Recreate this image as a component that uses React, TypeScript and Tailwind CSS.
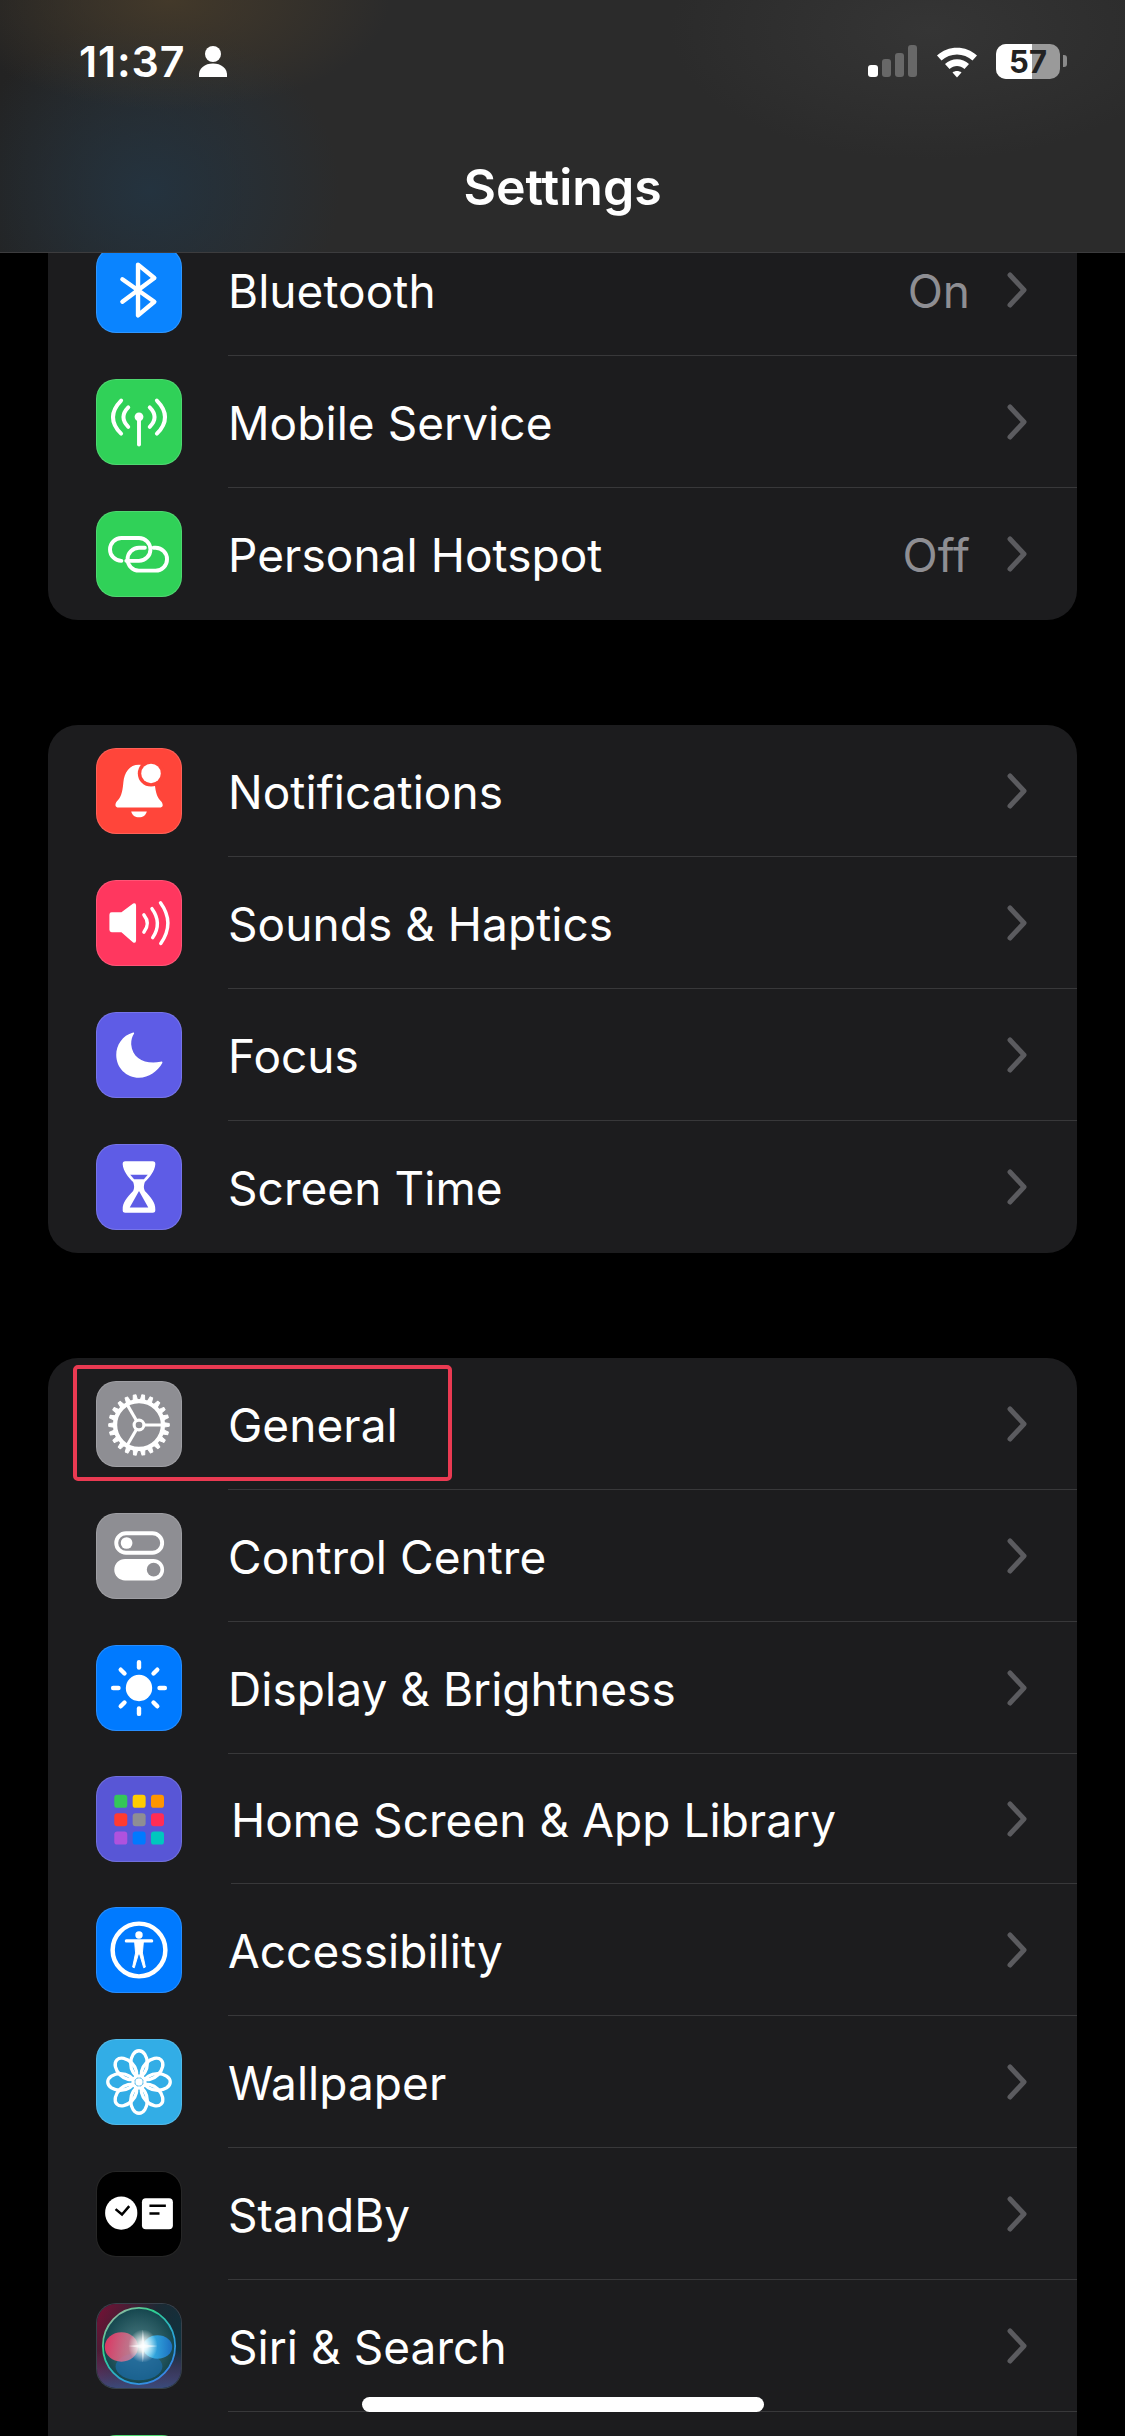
import React from "react";

const W = "#ffffff";

function Svg({ children }: { children: React.ReactNode }) {
  return (
    <svg viewBox="0 0 86 86" className="w-full h-full block">
      {children}
    </svg>
  );
}

const Bluetooth = () => (
  <Svg>
    <path d="M26 32 L58.7 55 L42 69 V17 L58.7 30.7 L26 55" fill="none" stroke={W} strokeWidth="4.5" strokeLinecap="round" strokeLinejoin="round" />
  </Svg>
);

const Antenna = () => (
  <Svg>
    <circle cx="43" cy="37.7" r="4.5" fill={W} />
    <path d="M43 38 V66" stroke={W} strokeWidth="4" strokeLinecap="round" />
    <g fill="none" stroke={W} strokeWidth="4" strokeLinecap="round">
      <path d="M32 28 Q22 38 32 48" />
      <path d="M54 28 Q64 38 54 48" />
      <path d="M24.7 21 Q8 38 24.7 55" />
      <path d="M61.3 21 Q78 38 61.3 55" />
    </g>
  </Svg>
);

const Hotspot = () => (
  <Svg>
    <g fill="none" stroke={W} strokeWidth="4" strokeLinecap="round">
      <path d="M25 50 a11.7 11.7 0 0 1 0 -23.4 h18 a11.7 11.7 0 0 1 0 23.4 h-13" />
      <path d="M58 36.6 h2 a11.7 11.7 0 0 1 0 23.4 h-17 a11.7 11.7 0 0 1 0 -23.4 h6" />
    </g>
  </Svg>
);

const Bell = () => (
  <Svg>
    <path d="M43 16 C33 16 28 24 27 34 C26 46 24 50 20 54 C18 57 18.7 60 22 60 H64 C68 60 68 57 66 54 C62 50 60 46 59 34 C58 24 53 16 43 16 Z" fill={W} />
    <path d="M35 64 H51 C50 68 47 70 43 70 C39 70 36 68 35 64 Z" fill={W} />
    <circle cx="55.3" cy="25" r="13.5" fill="#ff453a" />
    <circle cx="55.3" cy="25" r="10" fill={W} />
  </Svg>
);

const Speaker = () => (
  <Svg>
    <path d="M15 32 H25 L37 23 Q40 22 40 25 V61 Q40 64 37 63 L25 52.5 H15 Q12.7 52.5 12.7 50 V34.5 Q12.7 32 15 32 Z" fill={W} />
    <g fill="none" stroke={W} strokeLinecap="round" strokeWidth="3.5">
      <path d="M48 34.7 Q55 43.5 48 52.3" />
      <path d="M56.3 28.3 Q67 43 57 58" />
      <path d="M65 22.3 Q80 43 65.3 64" />
    </g>
  </Svg>
);

const Moon = () => (
  <Svg>
    <path d="M37 20 C26 23 19.7 33 19.7 43 C19.7 56 30 66.3 43 66.3 C53 66.3 62 60 67 51 Q67 49 65 50 C50 53 36 47 35 32 C35 27 36 24 38 21 Q38 19.5 37 20 Z" fill={W} />
  </Svg>
);

const Hourglass = () => (
  <Svg>
    <path d="M29 16.7 H57 Q60 16.7 59.7 20 C59 27 54 33 49 38 Q47 43 49 47 C55 53 60 59 59.7 66 Q60 69.3 57 69.3 H29 Q26 69.3 26.3 66 C26 59 31 53 37 47 Q39 43 37 38 C32 33 27 27 26.3 20 Q26 16.7 29 16.7 Z" fill={W} />
    <path d="M34 30.5 H52 L48 35 H38 Z" fill="#5e5ce6" />
    <path d="M43 47 L52.5 64 H33.5 Z" fill="#5e5ce6" />
  </Svg>
);

const Gear = () => {
  const teeth = Array.from({ length: 22 }, (_, i) => (i * 360) / 22);
  return (
    <Svg>
      <g stroke={W}>
        {teeth.map((a) => (
          <path key={a} d="M40.8 18 L41.6 13 H44.4 L45.2 18 Z" fill={W} strokeWidth="1" strokeLinejoin="round" transform={`rotate(${a + 8} 43 44)`} />
        ))}
      </g>
      <circle cx="43" cy="44" r="24.5" fill="none" stroke={W} strokeWidth="4.4" />
      <g stroke={W} strokeWidth="3.2">
        <line x1="48" y1="44" x2="68" y2="44" />
        <line x1="40.5" y1="39.7" x2="30.5" y2="22.4" />
        <line x1="40.5" y1="48.3" x2="30.5" y2="65.6" />
      </g>
      <circle cx="43" cy="44" r="5" fill="none" stroke={W} strokeWidth="3.2" />
    </Svg>
  );
};

const Toggles = () => (
  <Svg>
    <rect x="19.7" y="19.7" width="47" height="20" rx="10" fill="none" stroke={W} strokeWidth="4" />
    <circle cx="30.3" cy="29.7" r="6" fill={W} />
    <rect x="17.7" y="46" width="51" height="22" rx="11" fill={W} />
    <circle cx="58" cy="57" r="7" fill="#8e8e93" />
  </Svg>
);

const Sun = () => {
  const rays = [0, 45, 90, 135, 180, 225, 270, 315];
  return (
    <Svg>
      <circle cx="43" cy="43" r="13.5" fill={W} />
      {rays.map((a) => (
        <line key={a} x1="43" y1="22" x2="43" y2="16.5" stroke={W} strokeWidth="4.5" strokeLinecap="round" transform={`rotate(${a} 43 43)`} />
      ))}
    </Svg>
  );
};

const GridIcon = () => {
  const colors = ["#34c759", "#ffcc00", "#ff9500", "#ff3b30", "#8e8e93", "#ff2d55", "#af52de", "#007aff", "#00c7be"];
  return (
    <Svg>
      {colors.map((c, i) => (
        <rect key={c} x={17.7 + (i % 3) * 18.8} y={18.3 + Math.floor(i / 3) * 18.8} width="13.3" height="13.3" rx="3" fill={c} />
      ))}
    </Svg>
  );
};

const Access = () => (
  <Svg>
    <circle cx="43" cy="43" r="27" fill="none" stroke={W} strokeWidth="4.6" />
    <circle cx="43" cy="27.7" r="3.8" fill={W} />
    <path d="M30 33.7 H56" stroke={W} strokeWidth="3.2" strokeLinecap="round" />
    <path d="M38.5 34 H47.5 L46.5 46 L49.5 60.5 L47.8 61.2 L43.6 47 H42.4 L38.2 61.2 L36.5 60.5 L39.5 46 Z" fill={W} stroke={W} strokeWidth="1" strokeLinejoin="round" />
  </Svg>
);

const Flower = () => {
  const petals = [0, 45, 90, 135, 180, 225, 270, 315];
  return (
    <Svg>
      {petals.map((a) => (
        <ellipse key={a} cx="43" cy="24" rx="8.5" ry="13" fill="none" stroke={W} strokeWidth="3.4" transform={`rotate(${a} 43 43)`} />
      ))}
      <circle cx="43" cy="43" r="3.8" fill={W} />
    </Svg>
  );
};

const StandBy = () => (
  <Svg>
    <ellipse cx="24.8" cy="42" rx="16.5" ry="17" fill={W} />
    <path d="M19 38 L25.6 43.5 L33 35" fill="none" stroke="#000" strokeWidth="2.6" />
    <rect x="46" y="27" width="31.7" height="31.5" rx="4" fill={W} />
    <path d="M53.7 34.5 H70.5 M53.7 42.5 H64" stroke="#000" strokeWidth="2.6" />
  </Svg>
);

const Siri = () => (
  <svg viewBox="0 0 86 86" className="w-full h-full block">
    <defs>
      <linearGradient id="siriBg" x1="0" y1="0" x2="1" y2="0.6">
        <stop offset="0" stopColor="#7a0f35" />
        <stop offset="0.55" stopColor="#1b2a34" />
        <stop offset="1" stopColor="#0e3340" />
      </linearGradient>
      <linearGradient id="siriBg2" x1="0" y1="0" x2="0" y2="1">
        <stop offset="0.55" stopColor="#a02a70" stopOpacity="0" />
        <stop offset="1" stopColor="#43518a" stopOpacity="0.8" />
      </linearGradient>
      <linearGradient id="siriRing" x1="0" y1="0" x2="0.8" y2="1">
        <stop offset="0" stopColor="#c9a8b0" />
        <stop offset="0.35" stopColor="#30d28e" />
        <stop offset="0.7" stopColor="#2aa5d8" />
        <stop offset="1" stopColor="#3a7fe8" />
      </linearGradient>
      <radialGradient id="siriOrb" cx="0.5" cy="0.5" r="0.55">
        <stop offset="0" stopColor="#4e7f86" />
        <stop offset="1" stopColor="#0f4048" />
      </radialGradient>
      <radialGradient id="siriStar" cx="0.5" cy="0.5" r="0.5">
        <stop offset="0" stopColor="#ffffff" />
        <stop offset="0.3" stopColor="#ffffff" stopOpacity="0.85" />
        <stop offset="1" stopColor="#ffffff" stopOpacity="0" />
      </radialGradient>
      <linearGradient id="siriPink" x1="0" y1="0" x2="1" y2="0.2">
        <stop offset="0" stopColor="#e0305f" />
        <stop offset="1" stopColor="#e88aa0" stopOpacity="0.7" />
      </linearGradient>
      <linearGradient id="siriBlue" x1="0" y1="0" x2="1" y2="0">
        <stop offset="0" stopColor="#3fc8ee" />
        <stop offset="1" stopColor="#1c6fc0" />
      </linearGradient>
    </defs>
    <rect width="86" height="86" fill="url(#siriBg)" />
    <rect width="86" height="86" fill="url(#siriBg2)" />
    <ellipse cx="43" cy="43" rx="37" ry="39" fill="url(#siriOrb)" stroke="url(#siriRing)" strokeWidth="1.8" />
    <ellipse cx="43" cy="64" rx="24" ry="14" fill="#1c6fb0" opacity="0.65" />
    <ellipse cx="25" cy="44" rx="17" ry="15" fill="url(#siriPink)" />
    <ellipse cx="62" cy="44" rx="15" ry="12" fill="url(#siriBlue)" />
    <ellipse cx="47" cy="43" rx="15" ry="17" fill="url(#siriStar)" />
    <path d="M47 26 L48.5 41.5 L62 43 L48.5 45 L47 60 L45.5 45 L32 43 L45.5 41.5 Z" fill="#ffffff" opacity="0.6" />
  </svg>
);

type RowData = {
  label: string;
  bg: string;
  icon: React.ReactNode;
  value?: string;
};

const group1: RowData[] = [
  { label: "Bluetooth", bg: "bg-[#0a84ff]", icon: <Bluetooth />, value: "On" },
  { label: "Mobile Service", bg: "bg-[#30d158]", icon: <Antenna /> },
  { label: "Personal Hotspot", bg: "bg-[#30d158]", icon: <Hotspot />, value: "Off" },
];

const group2: RowData[] = [
  { label: "Notifications", bg: "bg-[#ff453a]", icon: <Bell /> },
  { label: "Sounds & Haptics", bg: "bg-[#ff375f]", icon: <Speaker /> },
  { label: "Focus", bg: "bg-[#5e5ce6]", icon: <Moon /> },
  { label: "Screen Time", bg: "bg-[#5e5ce6]", icon: <Hourglass /> },
];

const group3: RowData[] = [
  { label: "General", bg: "bg-[#8e8e93]", icon: <Gear /> },
  { label: "Control Centre", bg: "bg-[#8e8e93]", icon: <Toggles /> },
  { label: "Display & Brightness", bg: "bg-[#007aff]", icon: <Sun /> },
  { label: "Home Screen & App Library", bg: "bg-[#5856d6]", icon: <GridIcon /> },
  { label: "Accessibility", bg: "bg-[#007aff]", icon: <Access /> },
  { label: "Wallpaper", bg: "bg-[#32ade6]", icon: <Flower /> },
  { label: "StandBy", bg: "bg-black", icon: <StandBy /> },
  { label: "Siri & Search", bg: "bg-[#14202c]", icon: <Siri /> },
  { label: "", bg: "bg-[#30d158]", icon: null },
];

function Chevron() {
  return (
    <svg viewBox="0 0 22 38" className="w-[22px] h-[38px] shrink-0">
      <path d="M4 4 L18 19 L4 34" fill="none" stroke="#5b5b5f" strokeWidth="5" strokeLinecap="round" strokeLinejoin="round" />
    </svg>
  );
}

function Row({ row, last }: { row: RowData; last: boolean }) {
  const home = row.label.startsWith("Home");
  return (
    <div className={`flex items-center ${home ? "h-[130px]" : "h-[132px]"}`}>
      <div className={`ml-[48px] w-[86px] h-[86px] shrink-0 rounded-[20px] overflow-hidden border border-white/15 ${row.bg}`}>
        {row.icon}
      </div>
      <div
        className={`h-full flex-1 flex items-center pr-[49px] border-b ${last ? "border-transparent" : "border-[#38383a]"} ${home ? "ml-[49px]" : "ml-[46px]"}`}
      >
        <span className="flex-1 text-[46px] leading-none text-white tracking-[0.05px] pt-[3px]">{row.label}</span>
        {row.value && <span className="text-[46px] leading-none text-[#8e8e93] mr-[36px] pt-[3px]">{row.value}</span>}
        <Chevron />
      </div>
    </div>
  );
}

function Card({ rows, children }: { rows: RowData[]; children?: React.ReactNode }) {
  return (
    <section className="relative shrink-0 ml-[48px] w-[1029px] rounded-[30px] bg-[#1c1c1e] overflow-hidden">
      {rows.map((r, i) => (
        <Row key={i} row={r} last={i === rows.length - 1} />
      ))}
      {children}
    </section>
  );
}

export default function App() {
  return (
    <div className="relative w-[1125px] h-[2436px] overflow-hidden bg-black flex flex-col font-['Inter','Liberation_Sans',sans-serif]">
      <header className="relative z-10 h-[253px] shrink-0 border-b border-[#3c3c3e] bg-[#2b2b2b] bg-[radial-gradient(ellipse_220px_110px_at_170px_0px,#43392a_0%,transparent_100%),radial-gradient(ellipse_190px_170px_at_150px_190px,#24333f_0%,transparent_100%),radial-gradient(ellipse_260px_130px_at_930px_30px,#353535_0%,transparent_100%),linear-gradient(90deg,#232323_0%,#2b2b2b_22%)]">
        <div className="flex items-center justify-between h-[36px] mt-[43px] pl-[79px] pr-[58px]">
          <div className="flex items-center gap-[13px]">
            <span className="text-[43px] leading-none font-semibold text-white tracking-[0.8px]">11:37</span>
            <svg viewBox="0 0 30 32" className="w-[30px] h-[32px]">
              <circle cx="15" cy="9" r="8" fill={W} />
              <path d="M1 32 C0 23 7 18.5 15 18.5 C23 18.5 30 23 29 32 Z" fill={W} />
            </svg>
          </div>
          <div className="flex items-center">
            <div className="flex items-end gap-[4px] h-[32px]">
              <span className="w-[10px] h-[12px] rounded-[3px] bg-white" />
              <span className="w-[9px] h-[18px] rounded-[3px] bg-[#686868]" />
              <span className="w-[9px] h-[24px] rounded-[3px] bg-[#686868]" />
              <span className="w-[9px] h-[32px] rounded-[3px] bg-[#686868]" />
            </div>
            <svg viewBox="0 0 44 34" className="w-[44px] h-[34px] ml-[18px]">
              <path d="M2 11.5 C13 1 31 1 42 11.5 L37.5 16.5 C29 8.5 15 8.5 6.5 16.5 Z" fill={W} />
              <path d="M10 20 C16.5 13.5 27.5 13.5 34 20 L29.5 25 C25 21 19 21 14.5 25 Z" fill={W} />
              <path d="M22 33.5 L17.5 28.5 C20 26.5 24 26.5 26.5 28.5 Z" fill={W} />
            </svg>
            <div className="ml-[17px] relative w-[64px] h-[35px] rounded-[10px] overflow-hidden bg-[#9a9a9a] flex items-center justify-center">
              <div className="absolute left-0 top-0 bottom-0 w-[36px] bg-white" />
              <span className="relative text-[31px] leading-none font-bold text-[#222222]">57</span>
            </div>
            <div className="ml-[3px] w-[4px] h-[12px] rounded-r-[3px] bg-[#8a8a8a]" />
          </div>
        </div>
        <h1 className="mt-[83px] text-center text-[50px] leading-none font-semibold text-white">Settings</h1>
      </header>

      <main className="flex-1 min-h-0 overflow-hidden flex flex-col gap-[105px]">
        <div className="-mt-[29px] shrink-0">
          <Card rows={group1} />
        </div>
        <Card rows={group2} />
        <Card rows={group3}>
          <div className="absolute left-[25px] top-[7px] w-[379px] h-[116px] rounded-[5px] border-[4px] border-[#ea3a52]" />
        </Card>
      </main>

      <div className="absolute left-[362px] top-[2397px] w-[402px] h-[15px] rounded-full bg-white" />
    </div>
  );
}
